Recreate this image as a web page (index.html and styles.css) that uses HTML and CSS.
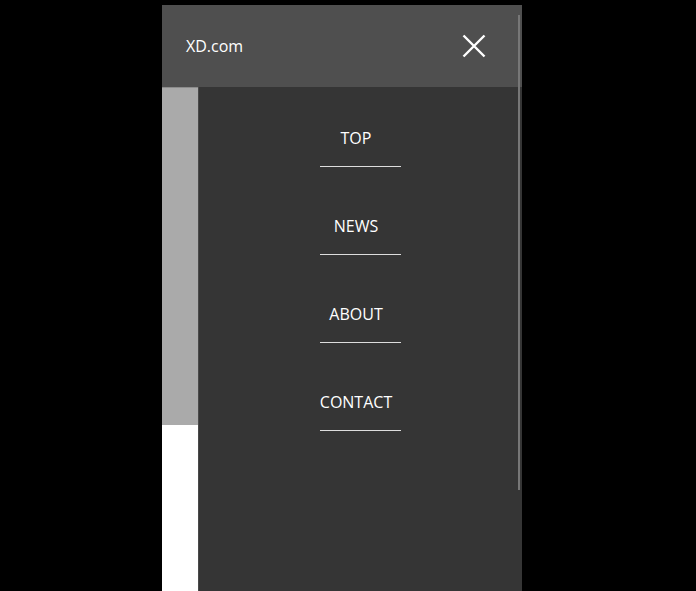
FILE: index.html
```html
<!DOCTYPE html>
<html lang="en">
<head>
    <meta charset="UTF-8">
    <meta name="viewport" content="width=device-width, initial-scale=1.0">
    <title>XD.com</title>
    <link rel="stylesheet" href="styles.css">
</head>
<body>
    <div class="phone">
        <header class="header">
            <span class="logo">XD.com</span>
            <button class="close" aria-label="close">
                <svg width="24" height="24" viewBox="0 0 24 24">
                    <path d="M1.5 1.5 L22.5 22.5 M22.5 1.5 L1.5 22.5" stroke="#fff" stroke-width="2.4" fill="none"/>
                </svg>
            </button>
        </header>

        <div class="content">
            <div class="side">
                <div class="side-top"></div>
                <div class="side-bottom"></div>
            </div>
            <nav class="menu">
                <div class="menu-item"><span class="label">TOP</span><span class="rule"></span></div>
                <div class="menu-item"><span class="label">NEWS</span><span class="rule"></span></div>
                <div class="menu-item"><span class="label">ABOUT</span><span class="rule"></span></div>
                <div class="menu-item"><span class="label">CONTACT</span><span class="rule"></span></div>
            </nav>
        </div>

        <div class="scrollbar"></div>
    </div>
</body>
</html>
```

FILE: styles.css
```css
body {
    margin: 0;
    background-color: #000;
    font-family: 'Open Sans', 'Segoe UI', sans-serif;
    color: #fff;
    overflow: hidden;
}

.phone {
    position: relative;
    width: 360px;
    height: 586px;
    margin: 5px 0 0 162px;
    display: flex;
    flex-direction: column;
}

.header {
    height: 82px;
    flex-shrink: 0;
    background-color: #4f4f4f;
    display: flex;
    align-items: center;
    justify-content: space-between;
    padding: 0 36px 0 24px;
}

.logo {
    font-size: 16px;
    line-height: 22px;
}

.close {
    background: none;
    border: none;
    padding: 0;
    width: 24px;
    height: 24px;
    display: block;
}

.close svg {
    display: block;
}

.content {
    flex: 1;
    display: flex;
}

.side {
    width: 36px;
    display: flex;
    flex-direction: column;
}

.side-top {
    height: 337px;
    background-color: #aaa;
    border-top: 1px solid #8c8c8c;
}

.side-bottom {
    flex: 1;
    background-color: #fff;
}

.menu {
    flex: 1;
    background-color: #353535;
    border-left: 1px solid #4a4a4a;
    padding-top: 40px;
}

.menu-item {
    display: flex;
    flex-direction: column;
    align-items: center;
    gap: 17px;
    margin-bottom: 48px;
}

.menu-item .label {
    font-size: 16px;
    line-height: 22px;
    padding-right: 9px;
}

.menu-item .rule {
    width: 81px;
    height: 1px;
    background-color: #ddd;
}

/* thin overlay scrollbar */
.scrollbar {
    position: absolute;
    right: 2px;
    top: 10px;
    width: 2px;
    height: 475px;
    background-color: #777;
}
```
